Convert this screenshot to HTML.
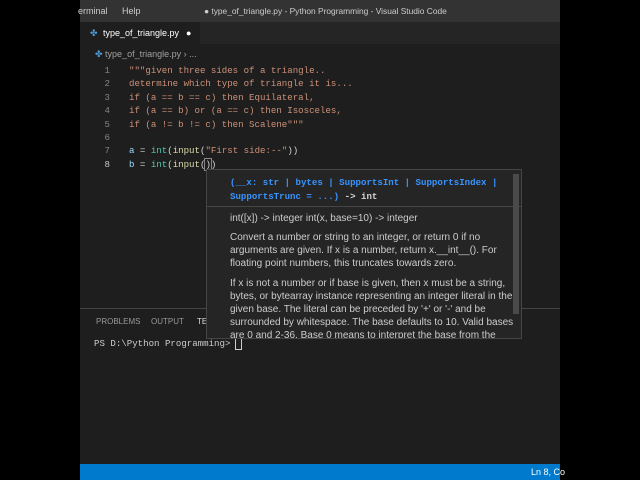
<!DOCTYPE html>
<html><head><style>
body{margin:0;width:640px;height:480px;background:#000;position:relative;overflow:hidden;font-family:"Liberation Sans",sans-serif}
.a{position:absolute;white-space:nowrap}
.m{font-family:"Liberation Mono",monospace;font-size:9.1px;white-space:pre}
.s{color:#ce9178}
.ln{color:#858585;width:30px;text-align:right;left:80px}
.w{font-size:10px;color:#cccccc;line-height:13px;white-space:normal}
</style></head><body>
<div class="a" style="left:80px;top:0;width:480px;height:480px;background:#1e1e1e"></div>
<div class="a" style="left:80px;top:0;width:480px;height:22px;background:#333333;color:#ccc;font-size:9px;line-height:22px">
<span class="a" style="left:-2px">erminal</span><span class="a" style="left:42px">Help</span>
<span class="a" style="left:124px;font-size:8.4px">● type_of_triangle.py - Python Programming - Visual Studio Code</span></div>
<div class="a" style="left:80px;top:22px;width:480px;height:22px;background:#252526"></div>
<div class="a" style="left:80px;top:22px;width:120px;height:22px;background:#1e1e1e;color:#fff;font-size:9px;line-height:22px">
<span class="a" style="left:10px;color:#4d9bd6">✤</span><span class="a" style="left:23px">type_of_triangle.py</span><span class="a" style="left:106px">●</span></div>
<div class="a" style="left:95px;top:49px;color:#a0a0a0;font-size:9px"><span style="color:#4d9bd6">✤</span> type_of_triangle.py › ...</div>
<div class="a m ln" style="top:64px;line-height:13.4px">1
2
3
4
5
6
7
<span style="color:#c6c6c6">8</span></div>
<div class="a m" style="left:129px;top:64px;line-height:13.4px;color:#d4d4d4"><span class="s">"""given three sides of a triangle..
determine which type of triangle it is...
if (a == b == c) then Equilateral,
if (a == b) or (a == c) then Isosceles,
if (a != b != c) then Scalene"""</span>

<span style="color:#9cdcfe">a</span> = <span style="color:#4ec9b0">int</span>(<span style="color:#dcdcaa">input</span>(<span class="s">"First side:--"</span>))
<span style="color:#9cdcfe">b</span> = <span style="color:#4ec9b0">int</span>(<span style="color:#dcdcaa">input</span>(<span style="outline:1px solid #888">)</span>)</div>
<div class="a" style="left:80px;top:308px;width:480px;height:1px;background:#444"></div>
<div class="a" style="left:96px;top:317px;font-size:8px;color:#999">PROBLEMS</div>
<div class="a" style="left:151px;top:317px;font-size:8px;color:#999">OUTPUT</div>
<div class="a" style="left:197px;top:317px;font-size:8px;color:#ddd">TE</div>
<div class="a m" style="left:94px;top:338px;color:#ccc">PS D:\Python Programming> <span style="outline:1px solid #ccc"> </span></div>
<div class="a" style="left:206px;top:169px;width:314px;height:168px;background:#252526;border:1px solid #454545;overflow:hidden">
<div class="a m" style="left:23px;top:6px;line-height:13.5px;color:#3794ff;font-weight:bold">(<span style="color:#3794ff">__x</span>: str | bytes | SupportsInt | SupportsIndex |
SupportsTrunc = ...) <span style="color:#d4d4d4">-&gt; int</span></div>
<div class="a" style="left:0;top:36px;width:314px;height:1px;background:#454545"></div>
<div class="a w" style="left:23px;top:42px;width:290px">int([x]) -&gt; integer int(x, base=10) -&gt; integer</div>
<div class="a w" style="left:23px;top:61px;width:290px">Convert a number or string to an integer, or return 0 if no arguments are given. If x is a number, return x.__int__(). For floating point numbers, this truncates towards zero.</div>
<div class="a w" style="left:23px;top:107px;width:292px">If x is not a number or if base is given, then x must be a string, bytes, or bytearray instance representing an integer literal in the given base. The literal can be preceded by '+' or '-' and be surrounded by whitespace. The base defaults to 10. Valid bases are 0 and 2-36. Base 0 means to interpret the base from the</div>
<div class="a" style="left:306px;top:4px;width:6px;height:140px;background:#4a4a4a"></div>
</div>
<div class="a" style="left:80px;top:464px;width:480px;height:16px;background:#007acc;color:#fff;font-size:9px;line-height:16px"><span class="a" style="left:451px">Ln 8, Co</span></div>
</body></html>
